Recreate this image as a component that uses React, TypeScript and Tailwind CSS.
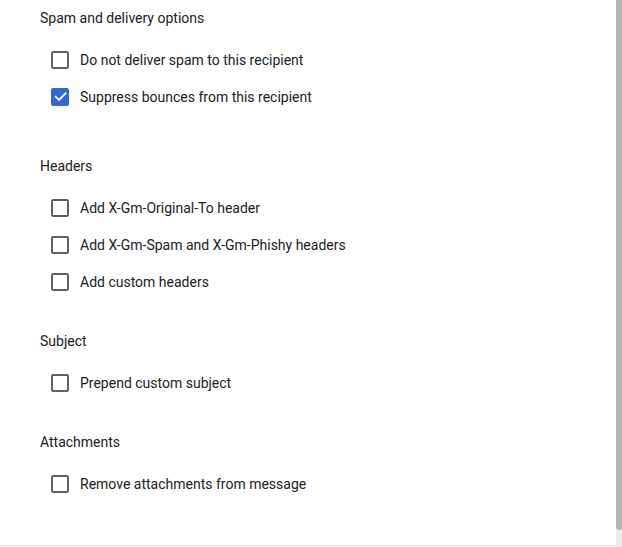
import React from "react";

function Box({ checked }: { checked?: boolean }) {
  if (checked) {
    return (
      <div className="w-[18px] h-[18px] rounded-[2px] bg-[#3367d6] flex items-center justify-center shrink-0">
        <svg width="15" height="15" viewBox="0 0 24 24" fill="none">
          <path d="M4.5 12.5l5 5L20 7" stroke="#fff" strokeWidth="3" strokeLinecap="square" />
        </svg>
      </div>
    );
  }
  return <div className="w-[18px] h-[18px] rounded-[2px] border-2 border-[#5f6368] shrink-0" />;
}

function Row({ label, checked }: { label: string; checked?: boolean }) {
  return (
    <div className="h-[37px] flex items-center pl-[11px] gap-[11px]">
      <Box checked={checked} />
      <span className="text-[14px] leading-[20px] text-[#202124]">{label}</span>
    </div>
  );
}

function Section({ title, rows, className }: { title: string; rows: { label: string; checked?: boolean }[]; className?: string }) {
  return (
    <div className={className}>
      <div className="text-[14px] leading-[20px] text-[#202124]">{title}</div>
      <div className="mt-[13px] flex flex-col">
        {rows.map((r) => (
          <Row key={r.label} label={r.label} checked={r.checked} />
        ))}
      </div>
    </div>
  );
}

export default function App() {
  return (
    <div
      className="relative w-[622px] h-[547px] bg-white overflow-hidden"
      style={{ fontFamily: "Roboto, 'Noto Sans', Arial, sans-serif" }}
    >
      <div className="h-[546px] border-b border-[#dadce0] pl-[40px] pt-[8px]">
        <Section
          title="Spam and delivery options"
          rows={[
            { label: "Do not deliver spam to this recipient" },
            { label: "Suppress bounces from this recipient", checked: true },
          ]}
        />
        <Section
          className="mt-[41px]"
          title="Headers"
          rows={[
            { label: "Add X-Gm-Original-To header" },
            { label: "Add X-Gm-Spam and X-Gm-Phishy headers" },
            { label: "Add custom headers" },
          ]}
        />
        <Section className="mt-[31px]" title="Subject" rows={[{ label: "Prepend custom subject" }]} />
        <Section className="mt-[31px]" title="Attachments" rows={[{ label: "Remove attachments from message" }]} />
      </div>
      <div className="absolute top-0 right-0 w-[6px] h-[547px] bg-[#ececec]">
        <div className="w-[6px] h-[530px] bg-[#b3b3b3] rounded-b-[3px]" />
      </div>
    </div>
  );
}
